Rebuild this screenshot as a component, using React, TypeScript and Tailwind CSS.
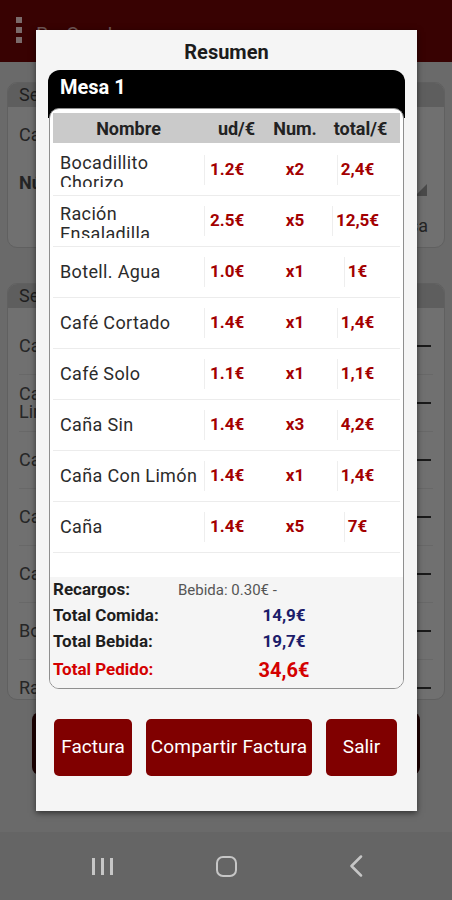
const items = [
  { name: 'Bocadillito Chorizo', price: '1.2€', qty: 'x2', total: '2,4€' },
  { name: 'Ración Ensaladilla', price: '2.5€', qty: 'x5', total: '12,5€' },
  { name: 'Botell. Agua', price: '1.0€', qty: 'x1', total: '1€' },
  { name: 'Café Cortado', price: '1.4€', qty: 'x1', total: '1,4€' },
  { name: 'Café Solo', price: '1.1€', qty: 'x1', total: '1,1€' },
  { name: 'Caña Sin', price: '1.4€', qty: 'x3', total: '4,2€' },
  { name: 'Caña Con Limón', price: '1.4€', qty: 'x1', total: '1,4€' },
  { name: 'Caña', price: '1.4€', qty: 'x5', total: '7€' },
];

const backRows = ['Café Cortado', 'Caña Con Limón', 'Café Solo', 'Caña Sin', 'Caña', 'Botell. Agua', 'Ración'];

function Background() {
  return (
    <>
      <div className="h-[62px] bg-[#380202] flex items-center px-[16px] gap-[14px] shrink-0">
        <div className="flex flex-col gap-[4px] -mt-[2px]">
          <span className="w-[6px] h-[6px] bg-[#7a6a6a]" />
          <span className="w-[6px] h-[6px] bg-[#7a6a6a]" />
          <span className="w-[6px] h-[6px] bg-[#7a6a6a]" />
        </div>
        <span className="text-[20px] text-[#6e5656] mt-[8px]">BarCocde</span>
      </div>

      <main className="flex-1 px-[7px] pt-[20px] flex flex-col">
        <div className="h-[166px] rounded-[10px] bg-[#707070] border border-[#606060] overflow-hidden">
          <div className="h-[24px] bg-[#5e5e5e] px-[11px] text-[18px] leading-[24px] text-[#1f1f1f]">Selección</div>
          <div className="px-[11px] pt-[14px] text-[18px] text-[#242424]">Camarero</div>
          <div className="px-[11px] pt-[20px] flex justify-between items-center">
            <span className="text-[18px] font-bold text-[#242424]">Número</span>
            <span className="w-0 h-0 border-l-[12px] border-l-transparent border-b-[12px] border-b-[#4a4a4a] mr-[6px] mt-[16px]" />
          </div>
          <div className="px-[11px] pt-[16px] text-right pr-[16px] text-[18px] text-[#242424]">Mesa</div>
        </div>

        <div className="mt-[35px] h-[417px] rounded-[10px] bg-[#707070] border border-[#606060] overflow-hidden">
          <div className="h-[24px] bg-[#5e5e5e] px-[11px] text-[18px] leading-[24px] text-[#1f1f1f]">Selección</div>
          <div className="flex flex-col px-[11px] pt-[10px]">
            {backRows.map((r) => (
              <div key={r} className="h-[57px] border-b border-[#686868] flex items-center justify-between">
                <span className="text-[18px] leading-[18px] text-[#262626] w-[125px]">{r}</span>
                <span className="flex items-center mr-[2px]">
                  <span className="w-[2px] h-[22px] bg-[#1a1a1a]" />
                  <span className="w-[14px] h-[2px] bg-[#1a1a1a]" />
                </span>
              </div>
            ))}
          </div>
        </div>

        <div className="mt-[12px] h-[63px] flex justify-between px-[25px]">
          <div className="w-[120px] rounded-[8px] bg-[#1c0202]" />
          <div className="w-[120px] rounded-[8px] bg-[#1c0202]" />
        </div>
      </main>

      <nav className="h-[68px] bg-[#656565] flex items-center justify-around px-[40px] shrink-0">
        <div className="flex gap-[6px] w-[90px] justify-center">
          <span className="w-[3px] h-[17px] bg-[#c6c6c6]" />
          <span className="w-[3px] h-[17px] bg-[#c6c6c6]" />
          <span className="w-[3px] h-[17px] bg-[#c6c6c6]" />
        </div>
        <div className="w-[90px] flex justify-center">
          <span className="w-[21px] h-[21px] rounded-[7px] border-[2.5px] border-[#c6c6c6]" />
        </div>
        <div className="w-[90px] flex justify-center pl-[12px]">
          <svg width="14" height="22" viewBox="0 0 14 22" fill="none">
            <path d="M12 1.5 2.5 11 12 20.5" stroke="#c6c6c6" strokeWidth="2.5" strokeLinecap="round" strokeLinejoin="round" />
          </svg>
        </div>
      </nav>
    </>
  );
}

function Dialog() {
  return (
    <div className="absolute left-[36px] top-[30px] w-[381px] h-[781px] bg-[#f5f5f5] shadow-[0_2px_6px_rgba(0,0,0,0.55)] flex flex-col">
      <div className="h-[40px] flex items-center justify-center pt-[4px] text-[20px] font-bold text-[#1c1c1c]">
        Resumen
      </div>

      <div className="mx-[12px]">
        <div className="h-[48px] bg-black rounded-t-[12px] px-[12px]">
          <div className="h-[34px] flex items-center text-[20px] font-bold text-white">Mesa 1</div>
        </div>
        <div className="-mt-[10px] mx-[1px] bg-white rounded-[10px] border border-[#8f8f8f] overflow-hidden flex flex-col">
          <div className="px-[3px] pt-[4px]">
            <div className="h-[30px] bg-[#cacaca] grid grid-cols-[151px_65px_52px_1fr] items-center text-[18px] font-bold text-[#222]">
              <span className="text-center">Nombre</span>
              <span className="text-center">ud/€</span>
              <span className="text-center">Num.</span>
              <span className="text-center whitespace-nowrap">total/€</span>
            </div>
            <div className="mt-[2px]">
              {items.map((it) => (
                <div
                  key={it.name}
                  className="h-[51px] grid grid-cols-[151px_65px_52px_1fr] items-center border-b border-[#ececec]"
                >
                  <div className="pl-[7px] pr-[4px] max-h-[34px] overflow-hidden text-[18px] leading-[20px] tracking-[0.02em] text-[#2b2b2b]">
                    {it.name}
                  </div>
                  <div className="border-l border-[#eeeeee] pl-[5px] h-[30px] flex items-center text-[17px] font-bold text-[#a30000]">
                    {it.price}
                  </div>
                  <div className="text-center text-[17px] font-bold text-[#a30000]">{it.qty}</div>
                  <div className="flex justify-center pr-[10px]">
                    <span className="border-l border-[#eeeeee] pl-[3px] h-[30px] flex items-center text-[17px] font-bold text-[#a30000]">
                      {it.total}
                    </span>
                  </div>
                </div>
              ))}
            </div>
          </div>
          <div className="h-[24px]" />
          <div className="bg-[#f5f5f5] px-[3px] pb-[3px]">
            <div className="h-[26px] flex items-center">
              <span className="w-[125px] text-[17px] font-bold text-[#1e1e1e]">Recargos:</span>
              <span className="text-[15px] text-[#555]">Bebida: 0.30€ -</span>
            </div>
            <div className="h-[26px] flex items-center">
              <span className="w-[125px] text-[17px] font-bold text-[#1e1e1e] whitespace-nowrap">Total Comida:</span>
              <span className="flex-1 text-center pr-[10px] text-[17px] font-bold text-[#1c1c6a]">14,9€</span>
            </div>
            <div className="h-[26px] flex items-center">
              <span className="w-[125px] text-[17px] font-bold text-[#1e1e1e] whitespace-nowrap">Total Bebida:</span>
              <span className="flex-1 text-center pr-[10px] text-[17px] font-bold text-[#1c1c6a]">19,7€</span>
            </div>
            <div className="h-[30px] flex items-center">
              <span className="w-[125px] text-[17px] font-bold text-[#d40000] whitespace-nowrap">Total Pedido:</span>
              <span className="flex-1 text-center pr-[10px] text-[20px] font-bold text-[#d40000]">34,6€</span>
            </div>
          </div>
        </div>
      </div>

      <div className="mt-[30px] flex gap-[14px] pl-[18px]">
        <button className="w-[78px] h-[57px] rounded-[5px] bg-[#800000] text-white text-[19px]">Factura</button>
        <button className="w-[166px] h-[57px] rounded-[5px] bg-[#800000] text-white text-[19px] tracking-[0.01em] whitespace-nowrap">
          Compartir Factura
        </button>
        <button className="w-[71px] h-[57px] rounded-[5px] bg-[#800000] text-white text-[19px]">Salir</button>
      </div>
    </div>
  );
}

export default function App() {
  return (
    <div className="relative w-[452px] h-[900px] overflow-hidden bg-[#6a6a6a] flex flex-col font-['Roboto',sans-serif]">
      <Background />
      <Dialog />
    </div>
  );
}
